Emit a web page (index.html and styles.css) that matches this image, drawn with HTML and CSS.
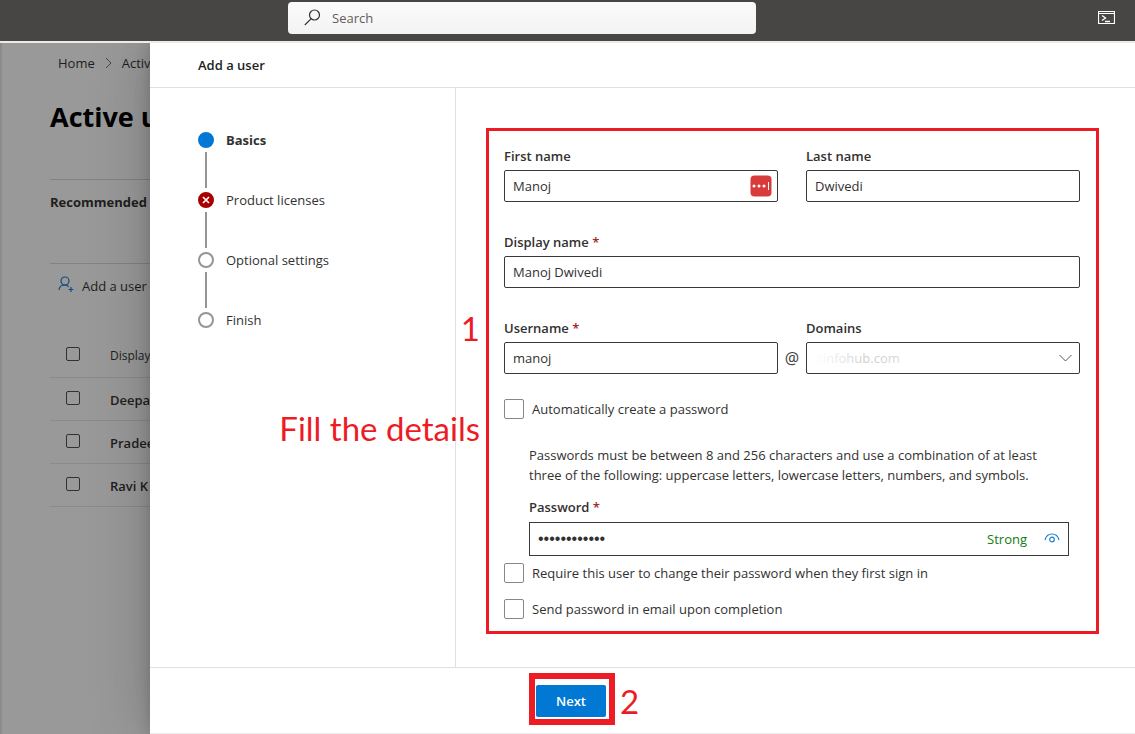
FILE: index.html
```html
<!DOCTYPE html>
<html lang="en">
<head>
<meta charset="utf-8">
<title>Add a user</title>
<link rel="stylesheet" href="styles.css">
</head>
<body>
<header class="topbar">
  <label class="search">
    <svg width="18" height="18" viewBox="0 0 18 18" fill="none" stroke="#333" stroke-width="1.2"><circle cx="10.500" cy="6" r="5"/><path d="M7 9.800.8 16"/></svg>
    <input type="search" placeholder="Search" aria-label="Search">
  </label>
  <button class="shell" type="button" aria-label="Open shell">
    <svg width="17" height="14" viewBox="0 0 17 14" fill="none" stroke="#fff"><path d="M.5.5h16v12H.5z" stroke-width="1.200"/><path d="M.5 2.500h16"/><path d="M4 4.500 7.500 7 4 9.500M7 10.500h5" stroke-width="1.300"/></svg>
  </button>
</header>
<div class="workspace">
  <div class="page">
    <nav class="crumbs">
      <a href="#">Home</a>
      <svg width="7" height="12" viewBox="0 0 7 12" fill="none" stroke="#444"><path d="M1 1l5 5-5 5"/></svg>
      <a href="#">Active users</a>
    </nav>
    <h1 class="title">Active users</h1>
    <div class="recommended">Recommended</div>
    <button class="command" type="button">
      <svg width="17" height="17" viewBox="0 0 17 17" fill="none" stroke="#0f4c81" stroke-width="1.200"><circle cx="7" cy="5" r="4"/><path d="M1 14c.3-3 2.800-5 6-5 1.500 0 2.800.6 3.800 1.800M13 11v5M10.500 13.500h5"/></svg>
      <span>Add a user</span>
    </button>
    <table class="users">
      <thead><tr><th class="tick"><input type="checkbox" aria-label="Select all"></th><th>Display</th></tr></thead>
      <tbody>
        <tr><td class="tick"><input type="checkbox" aria-label="Select Deepak"></td><td>Deepak</td></tr>
        <tr><td class="tick"><input type="checkbox" aria-label="Select Pradeep"></td><td>Pradeep</td></tr>
        <tr><td class="tick"><input type="checkbox" aria-label="Select Ravi K"></td><td>Ravi K</td></tr>
      </tbody>
    </table>
  </div>
  <main class="panel">
    <h2 class="panel-title">Add a user</h2>
    <div class="panel-body">
      <ol class="steps">
        <li class="step current"><span class="dot"></span>Basics</li>
        <li class="step error"><span class="dot"><svg width="8" height="8" viewBox="0 0 8 8" stroke="#fff" stroke-width="1.600"><path d="M1 1l6 6M7 1 1 7"/></svg></span>Product licenses</li>
        <li class="step"><span class="dot"></span>Optional settings</li>
        <li class="step"><span class="dot"></span>Finish</li>
      </ol>
      <div class="content">
        <form class="form" id="basics">
          <span class="note note-one">1</span>
          <span class="note note-fill">Fill the details</span>
          <div class="row">
            <div class="field">
              <label for="first">First name</label>
              <div class="box">
                <input id="first" type="text" value="Manoj">
                <svg class="vault" width="22" height="22" viewBox="0 0 22 22"><rect x=".5" y=".5" width="21" height="21" rx="4" fill="#d93b3b"/><g fill="#fff"><circle cx="4" cy="11" r="1.500"/><circle cx="9" cy="11" r="1.500"/><circle cx="14" cy="11" r="1.500"/><path d="M18 7h1v8h-1z"/></g></svg>
              </div>
            </div>
            <span></span>
            <div class="field">
              <label for="last">Last name</label>
              <div class="box"><input id="last" type="text" value="Dwivedi"></div>
            </div>
          </div>
          <div class="field">
            <label for="display">Display name <em>*</em></label>
            <div class="box"><input id="display" type="text" value="Manoj Dwivedi"></div>
          </div>
          <div class="row">
            <div class="field">
              <label for="user">Username <em>*</em></label>
              <div class="box"><input id="user" type="text" value="manoj"></div>
            </div>
            <span class="at">@</span>
            <div class="field">
              <label for="domain">Domains</label>
              <div class="box domain">
                <select id="domain"><option>itinfohub.com</option></select>
                <svg class="chevron" width="13" height="8" viewBox="0 0 13 8" fill="none" stroke="#555"><path d="M.5 1l6 6 6-6"/></svg>
              </div>
            </div>
          </div>
          <div class="password-options">
            <label class="check"><input type="checkbox">Automatically create a password</label>
            <div class="password">
              <p>Passwords must be between 8 and 256 characters and use a combination of at least three of the following: uppercase letters, lowercase letters, numbers, and symbols.</p>
              <div class="field">
                <label for="pass">Password <em>*</em></label>
                <div class="box tall">
                  <input id="pass" type="password" value="abcdefghijkl">
                  <span class="strength">Strong</span>
                  <button class="reveal" type="button" aria-label="Show password">
                    <svg width="16" height="12" viewBox="0 0 16 12" fill="none" stroke="#1b80d0" stroke-width="1.200"><path d="M1 7C2 3 5 1 8 1s6 2 7 6"/><circle cx="8" cy="6.500" r="2.300"/></svg>
                  </button>
                </div>
              </div>
            </div>
            <label class="check"><input type="checkbox">Require this user to change their password when they first sign in</label>
            <label class="check last"><input type="checkbox">Send password in email upon completion</label>
          </div>
        </form>
      </div>
    </div>
    <footer class="footer">
      <div class="highlight"><button class="next" type="submit" form="basics">Next</button></div>
      <span class="note">2</span>
    </footer>
  </main>
</div>
</body>
</html>
```
FILE: styles.css
```css
* { box-sizing: border-box; }
body, h1, h2, p, ol { margin: 0; padding: 0; }
body {
  height: 100vh;
  display: flex;
  flex-direction: column;
  overflow: hidden;
  font: 13px/20px "Open Sans", "Noto Sans", sans-serif;
  color: #323130;
}
input, select, button { font: inherit; color: inherit; }
button { border: 0; background: none; padding: 0; }
a { color: inherit; text-decoration: none; }
svg { display: block; flex: none; }

.topbar {
  position: relative;
  z-index: 2;
  flex: none;
  height: 43px;
  padding: 1px 20px 7px 288px;
  display: flex;
  align-items: center;
  justify-content: space-between;
  background: #484644;
  border-bottom: 2px solid #edebe9;
}
.search {
  flex: 0 1 468px;
  height: 32px;
  padding: 0 16px;
  display: flex;
  align-items: center;
  gap: 10px;
  border-radius: 4px;
  background: linear-gradient(#fbfbfb, #f3f3f3);
}
.search input {
  flex: 1;
  min-width: 0;
  border: 0;
  padding: 0;
  outline: 0;
  background: none;
}
.search input::placeholder { color: #605e5c; opacity: 1; }

.workspace { flex: 1; min-height: 0; display: flex; }

.page {
  flex: none;
  width: 150px;
  overflow: hidden;
  padding: 10px 0 0 48px;
  border-left: 2px solid #8b8b8b;
  background: #999;
  color: #1f1e1d;
  white-space: nowrap;
}
.crumbs {
  display: flex;
  align-items: center;
  gap: 10px;
  padding-left: 8px;
}
.title {
  padding: 26px 0 44px;
  font-size: 27px;
  line-height: 36px;
  font-weight: 700;
  color: #000;
  border-bottom: 1px solid #838383;
  margin-bottom: 12px;
}
.recommended {
  height: 71px;
  font-weight: 700;
}
.command {
  width: 100%;
  height: 71px;
  padding: 12px 0 0 8px;
  display: flex;
  align-items: flex-start;
  gap: 7px;
  border-top: 1px solid #838383;
}
.users { width: 200px; border-collapse: collapse; }
.users th, .users td {
  height: 43px;
  padding: 2px 0 0;
  text-align: left;
  border-bottom: 1px solid #8a8a8a;
  font-weight: 600;
}
.users th { font-size: 12px; font-weight: 400; }
.users .tick { width: 60px; padding-left: 16px; }
.users input {
  display: block;
  appearance: none;
  width: 14px;
  height: 14px;
  margin: 0 0 4px;
  border: 1px solid #323130;
  border-radius: 2px;
}

.panel {
  position: relative;
  flex: 1;
  min-width: 0;
  display: flex;
  flex-direction: column;
  background: #fff;
  border-bottom: 1px solid #edebe9;
  box-shadow: 0 0 58px rgba(0, 0, 0, .22), 0 0 14px rgba(0, 0, 0, .18);
}
.panel-title {
  padding: 12px 48px;
  font-size: 13px;
  line-height: 20px;
  font-weight: 600;
  color: #201f1e;
  border-bottom: 1px solid #e1dfdd;
}
.panel-body { flex: 1; min-height: 0; display: flex; }

.steps {
  flex: none;
  width: 306px;
  padding: 42px 48px;
  list-style: none;
  border-right: 1px solid #e1dfdd;
}
.step {
  display: grid;
  grid-template-columns: 16px 1fr;
  column-gap: 12px;
  align-items: center;
}
.step:not(:last-child)::after {
  content: "";
  width: 2px;
  height: 36px;
  margin: 2px 7px;
  background: #979593;
}
.dot {
  width: 16px;
  height: 16px;
  display: grid;
  place-items: center;
  border: 2px solid #979593;
  border-radius: 50%;
}
.current { font-weight: 700; }
.current .dot { background: #0078d4; border-color: #0078d4; }
.error .dot { background: #a80000; border-color: #a80000; }

.content { flex: 1; padding: 40px 36px 33px 30px; }
.form {
  position: relative;
  padding: 15px 16px 12px 15px;
  border: 3px solid #ed1c24;
  display: flex;
  flex-direction: column;
  gap: 30px;
}
.row { display: grid; grid-template-columns: 1fr 28px 1fr; }
.field { display: flex; flex-direction: column; gap: 4px; }
.field label { font-weight: 600; }
.field em { font-style: normal; color: #a4262c; }
.box {
  height: 32px;
  padding: 0 5px 0 8px;
  display: flex;
  align-items: center;
  border: 1px solid #3b3a39;
  border-radius: 2px;
}
.box input, .box select {
  flex: 1;
  min-width: 0;
  padding: 0;
  border: 0;
  outline: 0;
  appearance: none;
  background: none;
}
.at {
  align-self: end;
  font-family: "Noto Sans", sans-serif;
  font-size: 16px;
  line-height: 32px;
  text-align: center;
  color: #484644;
}
.domain { position: relative; }
.domain select { color: #c0c0c0; }
.domain::after {
  content: "";
  position: absolute;
  inset: 0 auto 0 4px;
  width: 96px;
  background: linear-gradient(90deg, #fff 4%, rgba(255, 255, 255, .2) 60%, rgba(255, 255, 255, .5));
  pointer-events: none;
}
.domain .chevron { margin-right: 2px; }

.password-options { margin-top: -5px; }
.check {
  display: flex;
  align-items: center;
  gap: 8px;
}
.check input {
  appearance: none;
  width: 20px;
  height: 20px;
  margin: 0;
  border: 1px solid #8a8886;
  border-radius: 2px;
}
.check.last { margin-top: 16px; }
.password { padding: 26px 11px 7px 25px; }
.password p { margin-bottom: 12px; }
.password .field { gap: 5px; }
.tall { height: 34px; padding-right: 8px; border-radius: 0; }
.tall input { font: 16px/20px "Liberation Sans", sans-serif; }
.strength { color: #107c10; margin-right: 17px; }

.note {
  font: 33px/40px Lato, "Open Sans", sans-serif;
  color: #ed1c24;
  white-space: nowrap;
}
.note-one, .note-fill { position: absolute; right: 100%; padding-right: 9px; }
.note-one { top: 177px; }
.note-fill { top: 277px; }

.footer {
  flex: none;
  height: 66px;
  padding: 5px 0 0 379px;
  display: flex;
  align-items: flex-start;
  gap: 5px;
  border-top: 1px solid #e1dfdd;
}
.highlight { padding: 6px 3px 2px 1px; border: 6px solid #ed1c24; }
.next {
  display: block;
  width: 70px;
  height: 32px;
  border-radius: 2px;
  background: #0078d4;
  color: #fff;
  font-weight: 600;
}
.footer .note { padding-top: 8px; }
```
